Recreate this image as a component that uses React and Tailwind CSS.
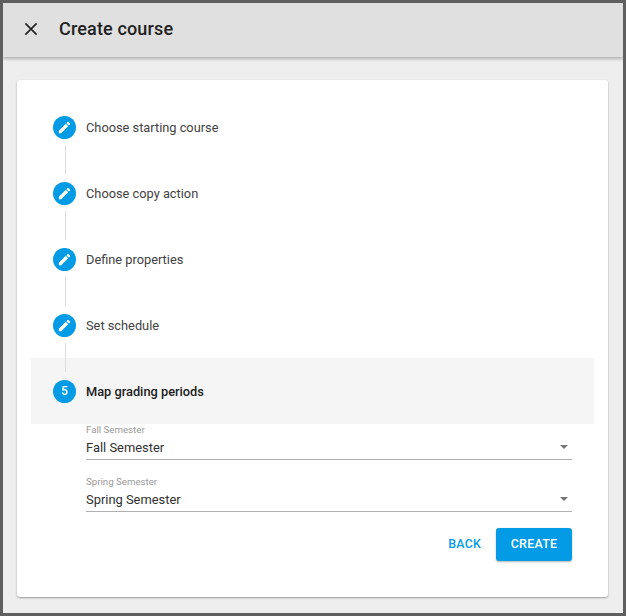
import React from "react";

const Pencil = () => (
  <svg viewBox="0 0 24 24" className="w-[15px] h-[15px]" fill="#fff">
    <path d="M3 17.25V21h3.75L17.81 9.94l-3.75-3.75L3 17.25zM20.71 7.04a1 1 0 0 0 0-1.41l-2.34-2.34a1 1 0 0 0-1.41 0l-1.83 1.83 3.75 3.75 1.83-1.83z" />
  </svg>
);

const Step = ({ label, connector, active, n }) => (
  <div className={`relative flex items-center h-[66px] pl-[22px] ${active ? "bg-[#f5f5f5]" : ""}`}>
    {connector && <div className="absolute left-[33.5px] top-[51px] w-px h-[29px] bg-[#dcdcdc] z-10" />}
    <div className="w-[23px] h-[23px] rounded-full bg-[#039be5] flex items-center justify-center text-white text-[12px] font-medium">
      {n || <Pencil />}
    </div>
    <span className={`ml-[10px] mt-[1px] text-[12.8px] leading-[16px] ${active ? "font-medium text-[#212121]" : "text-[#424242]"}`}>{label}</span>
  </div>
);

const Field = ({ label }) => (
  <div className="relative h-[36px] border-b border-[#b0b0b0] flex flex-col">
    <span className="text-[9.7px] leading-[10px] text-[#9a9a9a] mt-[1px]">{label}</span>
    <span className="text-[12.9px] leading-[16px] text-[#303030] mt-[5px]">{label}</span>
    <span className="absolute right-[4px] top-[21px] w-0 h-0 border-l-[4.5px] border-r-[4.5px] border-t-[4.5px] border-l-transparent border-r-transparent border-t-[#757575]" />
  </div>
);

export default function App() {
  return (
    <div className="w-[626px] h-[616px] border-[3px] border-[#5f5f5f] bg-[#eeeeee] flex flex-col font-['Roboto',sans-serif] overflow-hidden">
      <header className="h-[54px] shrink-0 bg-[#e0e0e0] flex items-center pl-[19px] pb-[2px] shadow-[0_2px_3px_rgba(0,0,0,0.25)] z-20">
        <svg viewBox="0 0 24 24" className="w-[18px] h-[18px]" fill="none" stroke="#212121" strokeWidth="2.2">
          <path d="M4.5 4.5l15 15M19.5 4.5l-15 15" />
        </svg>
        <h1 className="ml-[19px] text-[18px] font-medium text-[#212121] leading-[24px] tracking-[0.15px]">Create course</h1>
      </header>
      <main className="flex-1 pl-[14px] pr-[15px] pt-[23px] pb-[16px]">
        <div className="h-[517px] bg-white rounded-[3px] shadow-[0_1px_2px_rgba(0,0,0,0.35)] px-[14px] pt-[14px] flex flex-col">
          <Step label="Choose starting course" connector />
          <Step label="Choose copy action" connector />
          <Step label="Define properties" connector />
          <Step label="Set schedule" connector />
          <Step label="Map grading periods" active n="5" />
          <div className="pl-[55px] pr-[22px] flex flex-col gap-[16px]">
            <Field label="Fall Semester" />
            <Field label="Spring Semester" />
          </div>
          <div className="flex justify-end items-center pr-[22px] mt-[16px]">
            <button className="text-[12.4px] font-medium text-[#039be5] tracking-[0.2px] mr-[15px]">BACK</button>
            <button className="w-[76px] h-[33px] rounded-[3px] bg-[#039be5] text-white text-[12.4px] font-medium tracking-[0.3px] shadow-[0_1px_2px_rgba(0,0,0,0.3)]">CREATE</button>
          </div>
        </div>
      </main>
    </div>
  );
}
